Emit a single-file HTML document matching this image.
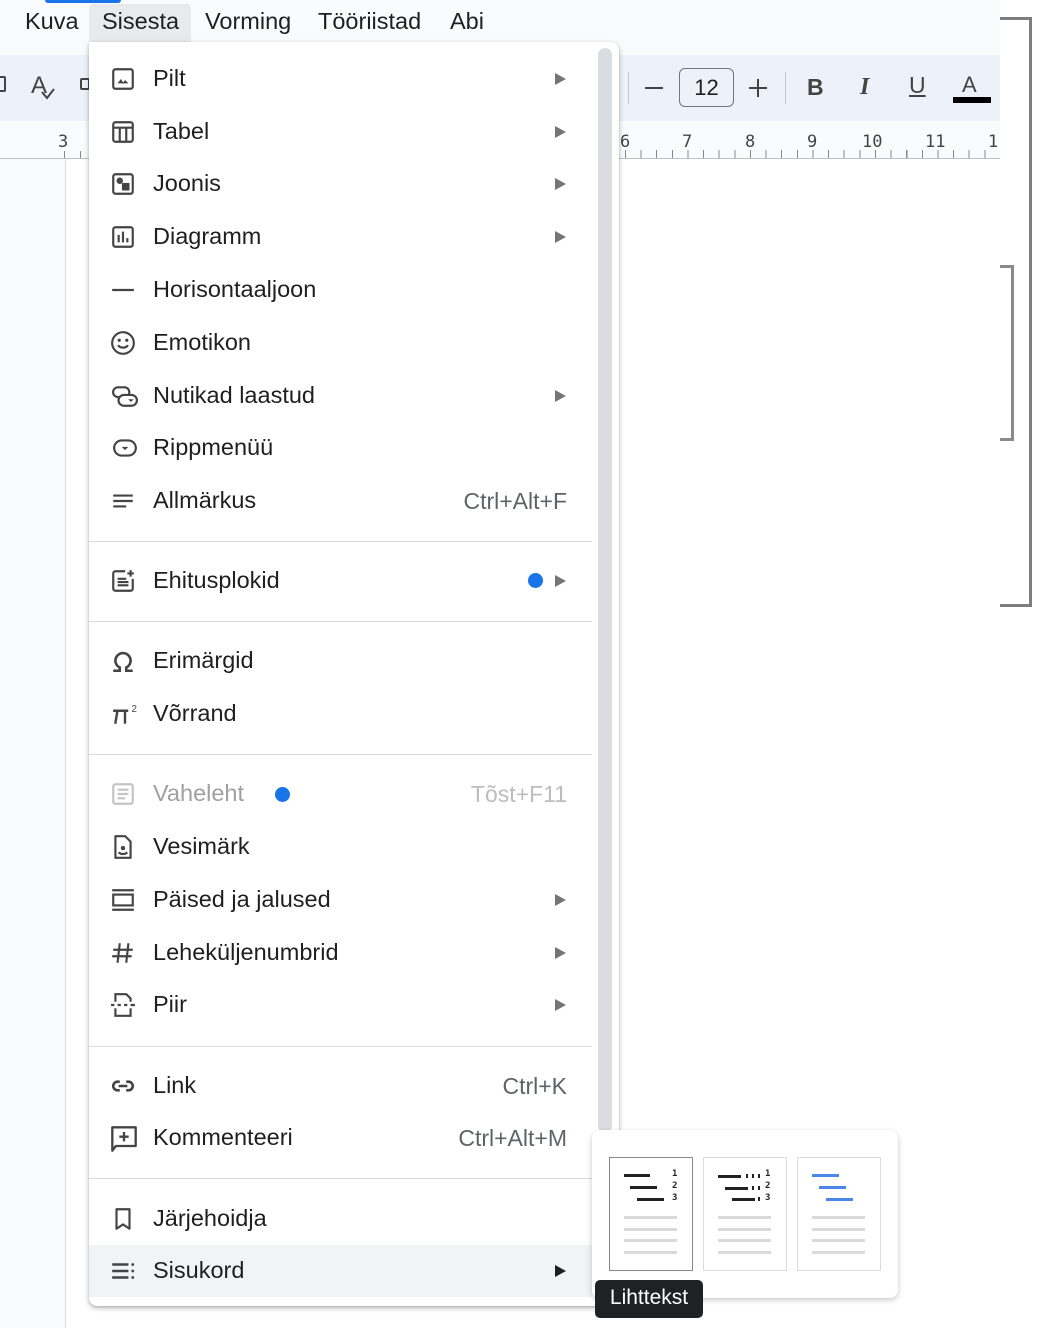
<!DOCTYPE html>
<html><head><meta charset="utf-8"><style>
*{margin:0;padding:0;box-sizing:border-box}
body{width:1047px;height:1328px;position:relative;overflow:hidden;background:#fff;font-family:"Liberation Sans",Roboto,sans-serif;color:#1f1f1f}
.a{position:absolute}
.mb{position:absolute;top:8px;font-size:23.5px;color:#1f1f1f}
.it{position:absolute;left:89px;width:503px;height:52px}
.it .t{position:absolute;left:64px;top:12px;font-size:23.5px;color:#1f1f1f;white-space:nowrap}
.it .s{position:absolute;right:25px;top:13px;font-size:23px;color:#5f6368}
.it .ar{position:absolute;left:466px;top:20px;width:0;height:0;border-left:11px solid #757575;border-top:6px solid transparent;border-bottom:6px solid transparent}
.it svg{position:absolute;left:21px;top:13px}
.sep{position:absolute;left:89px;width:503px;height:1px;background:#dadce0}
.rn{position:absolute;top:132px;font-size:17px;color:#444;font-family:"DejaVu Sans Mono","Liberation Mono",monospace}
.card{position:absolute;top:1157px;width:84px;height:114px;border:1px solid #dadce0;background:#fff}
.card .l{position:absolute;height:3px;background:#222}
.card .g{position:absolute;left:14px;width:53px;height:3px;background:#dadada}
.card .n{position:absolute;font-size:9px;font-weight:bold;font-family:"DejaVu Sans Mono",monospace;color:#222}
.card .d{position:absolute;width:2px;height:4px;background:#222}
</style></head><body>
<div class="a" style="left:0;top:0;width:1000px;height:55px;background:#f9fbfd"></div>
<div class="a" style="left:45px;top:0;width:76px;height:3px;background:#1a73e8;border-radius:0 0 3px 3px"></div>
<div class="a" style="left:89px;top:4px;width:102px;height:38px;background:#e8eaed;border-radius:4px 4px 0 0"></div>
<div class="mb" style="left:25px">Kuva</div>
<div class="mb" style="left:102px">Sisesta</div>
<div class="mb" style="left:205px">Vorming</div>
<div class="mb" style="left:318px">Tööriistad</div>
<div class="mb" style="left:450px">Abi</div>
<div class="a" style="left:0;top:55px;width:1000px;height:66px;background:#edf2fa"></div>
<div class="a" style="left:-6px;top:76px;width:12px;height:16px;border:2px solid #444;border-radius:2px"></div>
<div class="a" style="left:31px;top:72px;font-size:24px;color:#444">A</div>
<svg class="a" style="left:40px;top:88px" width="16" height="12"><path d="M2 4l5 6 7-9" stroke="#444" stroke-width="2" fill="none"/></svg>
<div class="a" style="left:80px;top:78px;width:10px;height:12px;border:2px solid #444;border-radius:2px"></div>
<div class="a" style="left:628px;top:72px;width:1px;height:32px;background:#c7c7c7"></div>
<div class="a" style="left:645px;top:87px;width:18px;height:2px;background:#444"></div>
<div class="a" style="left:679px;top:68px;width:55px;height:39px;border:1px solid #747775;border-radius:6px;font-size:22px;text-align:center;line-height:37px;color:#1f1f1f">12</div>
<div class="a" style="left:749px;top:87px;width:18px;height:2px;background:#444"></div>
<div class="a" style="left:757px;top:79px;width:2px;height:18px;background:#444"></div>
<div class="a" style="left:785px;top:72px;width:1px;height:32px;background:#c7c7c7"></div>
<div class="a" style="left:807px;top:74px;font-size:23px;font-weight:bold;color:#444">B</div>
<div class="a" style="left:860px;top:74px;font-size:24px;font-weight:bold;font-style:italic;color:#444;font-family:'Liberation Serif',serif">I</div>
<div class="a" style="left:909px;top:72px;font-size:23px;color:#444;text-decoration:underline">U</div>
<div class="a" style="left:962px;top:72px;font-size:22px;color:#444">A</div>
<div class="a" style="left:953px;top:97px;width:38px;height:6px;background:#000"></div>
<div class="a" style="left:0;top:121px;width:1000px;height:37px;background:#f9fbfd"></div>
<div class="a" style="left:0;top:158px;width:1000px;height:1px;background:#c0c0c0"></div>
<div class="a" style="left:0;top:159px;width:65px;height:1169px;background:#f9fbfd"></div>
<div class="a" style="left:65px;top:159px;width:1px;height:1169px;background:#dadce0"></div>
<div class="rn" style="left:58px">3</div>
<div class="a" style="left:64px;top:151px;width:1px;height:7px;background:#888"></div>
<div class="a" style="left:80px;top:151px;width:1px;height:7px;background:#888"></div>
<div class="a" style="left:625px;top:150px;width:375px;height:8px;background:repeating-linear-gradient(90deg,#888 0 1px,transparent 1px 15.625px)"></div>
<div class="rn" style="left:620px">6</div><div class="rn" style="left:682px">7</div><div class="rn" style="left:745px">8</div><div class="rn" style="left:807px">9</div><div class="rn" style="left:862px">10</div><div class="rn" style="left:925px">11</div><div class="rn" style="left:988px">1</div>
<div class="a" style="left:1000px;top:17px;width:32px;height:590px;border:3px solid #7d7d7d;border-left:none"></div>
<div class="a" style="left:1000px;top:265px;width:14px;height:176px;border:3px solid #8a8a8a;border-left:none"></div>

<div class="a" style="left:89px;top:42px;width:530px;height:1264px;background:#fff;border-radius:0 8px 8px 8px;box-shadow:0 2px 6px rgba(0,0,0,.25),0 1px 2px rgba(0,0,0,.15)"></div>
<div class="a" style="left:598px;top:48px;width:14px;height:1085px;background:#dadce0;border-radius:7px"></div>
<div class="a" style="left:89px;top:1245px;width:503px;height:52px;background:#f1f3f4"></div>

<div class="it" style="top:53px"><svg width="26" height="26" viewBox="0 0 24 24"><rect x="3" y="3" width="18" height="18" rx="2" fill="none" stroke="#444" stroke-width="2"/><path d="M7 16l3-4 2 3 2-2 3 3z" fill="#444"/></svg><span class="t">Pilt</span><span class="ar"></span></div>
<div class="it" style="top:106px"><svg width="26" height="26" viewBox="0 0 24 24"><rect x="3" y="3" width="18" height="18" rx="2" fill="none" stroke="#444" stroke-width="2"/><path d="M3 8h18M9 8v13M15 8v13" stroke="#444" stroke-width="2"/></svg><span class="t">Tabel</span><span class="ar"></span></div>
<div class="it" style="top:158px"><svg width="26" height="26" viewBox="0 0 24 24"><rect x="3" y="3" width="18" height="18" rx="2" fill="none" stroke="#444" stroke-width="2"/><circle cx="9" cy="9" r="3" fill="#444"/><rect x="11" y="11" width="7" height="7" fill="#444"/></svg><span class="t">Joonis</span><span class="ar"></span></div>
<div class="it" style="top:211px"><svg width="26" height="26" viewBox="0 0 24 24"><rect x="3" y="3" width="18" height="18" rx="2" fill="none" stroke="#444" stroke-width="2"/><path d="M8 10v7M12 7v10M16 13v4" stroke="#444" stroke-width="2"/></svg><span class="t">Diagramm</span><span class="ar"></span></div>
<div class="it" style="top:264px"><svg width="26" height="26" viewBox="0 0 24 24"><path d="M2 12h20" stroke="#444" stroke-width="2"/></svg><span class="t">Horisontaaljoon</span></div>
<div class="it" style="top:317px"><svg width="26" height="26" viewBox="0 0 24 24"><circle cx="12" cy="12" r="10" fill="none" stroke="#444" stroke-width="2"/><circle cx="8.5" cy="9.5" r="1.5" fill="#444"/><circle cx="15.5" cy="9.5" r="1.5" fill="#444"/><path d="M7.5 14c1.5 3 7.5 3 9 0" stroke="#444" stroke-width="2" fill="none"/></svg><span class="t">Emotikon</span></div>
<div class="it" style="top:370px"><svg width="30" height="26" viewBox="0 0 24 24"><rect x="1" y="4" width="15" height="9" rx="4.5" fill="none" stroke="#444" stroke-width="2"/><rect x="6" y="11" width="17" height="10" rx="5" fill="#fff" stroke="#444" stroke-width="2"/><path d="M15 15h5l-2.5 2.5z" fill="#444"/></svg><span class="t">Nutikad laastud</span><span class="ar"></span></div>
<div class="it" style="top:422px"><svg width="30" height="26" viewBox="0 0 24 24"><rect x="2" y="5" width="20" height="14" rx="7" fill="none" stroke="#444" stroke-width="2"/><path d="M9 11h6l-3 3z" fill="#444"/></svg><span class="t">Rippmenüü</span></div>
<div class="it" style="top:475px"><svg width="26" height="26" viewBox="0 0 24 24"><path d="M3 7h18M3 12h18M3 17h12" stroke="#444" stroke-width="2"/></svg><span class="t">Allmärkus</span><span class="s">Ctrl+Alt+F</span></div>
<div class="sep" style="top:541px"></div>
<div class="it" style="top:555px"><svg width="26" height="26" viewBox="0 0 24 24"><path d="M14 3H5a2 2 0 0 0-2 2v14a2 2 0 0 0 2 2h14a2 2 0 0 0 2-2v-9" fill="none" stroke="#444" stroke-width="2"/><path d="M7 10h8M7 13h10M7 16h10M19 2v6M16 5h6" stroke="#444" stroke-width="2"/></svg><span class="t">Ehitusplokid</span><span class="a" style="left:439px;top:18px;width:15px;height:15px;border-radius:50%;background:#1a73e8"></span><span class="ar"></span></div>
<div class="sep" style="top:621px"></div>
<div class="it" style="top:635px"><svg width="26" height="26" viewBox="0 0 24 24"><path d="M3 21h6v-3a7 7 0 1 1 6 0v3h6" fill="none" stroke="#444" stroke-width="2.4"/></svg><span class="t">Erimärgid</span></div>
<div class="it" style="top:688px"><svg width="30" height="26" viewBox="0 0 26 24"><path d="M2 9h14M6 9l-2 12M13 9v12" stroke="#444" stroke-width="2.2" fill="none"/><text x="19" y="10" font-size="9" fill="#444" font-family="Liberation Sans">2</text></svg><span class="t">Võrrand</span></div>
<div class="sep" style="top:754px"></div>
<div class="it" style="top:768px"><svg width="26" height="26" viewBox="0 0 24 24"><rect x="3" y="3" width="18" height="18" rx="2" fill="none" stroke="#c4c4c4" stroke-width="2"/><path d="M7 8h10M7 12h10M7 16h7" stroke="#c4c4c4" stroke-width="2"/></svg><span class="t" style="color:#a0a0a0">Vaheleht</span><span class="a" style="left:186px;top:19px;width:15px;height:15px;border-radius:50%;background:#1a73e8"></span><span class="s" style="color:#bdbdbd">Tõst+F11</span></div>
<div class="it" style="top:821px"><svg width="26" height="26" viewBox="0 0 24 24"><path d="M5 2h9l5 5v15H5z" fill="none" stroke="#444" stroke-width="2" stroke-linejoin="round"/><circle cx="12" cy="13" r="2" fill="#444"/><path d="M8 17c2 2 6 2 8 0" stroke="#444" stroke-width="2" fill="none"/></svg><span class="t">Vesimärk</span></div>
<div class="it" style="top:874px"><svg width="26" height="26" viewBox="0 0 24 24"><path d="M2 3h20M2 21h20" stroke="#444" stroke-width="2"/><rect x="3" y="7" width="18" height="10" fill="none" stroke="#444" stroke-width="2"/></svg><span class="t">Päised ja jalused</span><span class="ar"></span></div>
<div class="it" style="top:927px"><svg width="26" height="26" viewBox="0 0 24 24"><path d="M9 3L7 21M17 3l-2 18M3 9h18M2 15h18" stroke="#444" stroke-width="2"/></svg><span class="t">Leheküljenumbrid</span><span class="ar"></span></div>
<div class="it" style="top:979px"><svg width="26" height="26" viewBox="0 0 24 24"><path d="M5 9V2h10l4 4v3M5 15v7h14v-7M1 12h3M7 12h3M13 12h3M19 12h4" stroke="#444" stroke-width="2" fill="none"/></svg><span class="t">Piir</span><span class="ar"></span></div>
<div class="sep" style="top:1046px"></div>
<div class="it" style="top:1060px"><svg width="26" height="26" viewBox="0 0 24 24"><path d="M9 8H7a4 4 0 0 0 0 8h2M15 8h2a4 4 0 0 1 0 8h-2M8 12h8" stroke="#444" stroke-width="2.4" fill="none"/></svg><span class="t">Link</span><span class="s">Ctrl+K</span></div>
<div class="it" style="top:1112px"><svg width="28" height="28" viewBox="0 0 24 24"><path d="M2 2h20v16H5l-3 4z" fill="none" stroke="#444" stroke-width="2" stroke-linejoin="round"/><path d="M12 6v8M8 10h8" stroke="#444" stroke-width="2"/></svg><span class="t">Kommenteeri</span><span class="s">Ctrl+Alt+M</span></div>
<div class="sep" style="top:1178px"></div>
<div class="it" style="top:1193px"><svg width="26" height="26" viewBox="0 0 24 24"><path d="M6 3h12v18l-6-4-6 4z" fill="none" stroke="#444" stroke-width="2" stroke-linejoin="round"/></svg><span class="t">Järjehoidja</span></div>
<div class="it" style="top:1245px"><svg width="26" height="26" viewBox="0 0 24 24"><path d="M2 6h15M2 12h15M2 18h15" stroke="#444" stroke-width="2.2"/><circle cx="21" cy="6" r="1.3" fill="#444"/><circle cx="21" cy="12" r="1.3" fill="#444"/><circle cx="21" cy="18" r="1.3" fill="#444"/></svg><span class="t">Sisukord</span><span class="ar" style="border-left-color:#1f1f1f"></span></div>

<div class="a" style="left:592px;top:1130px;width:306px;height:168px;background:#fff;border-radius:8px;box-shadow:0 2px 6px rgba(0,0,0,.22)"></div>
<div class="card" style="left:609px;border-color:#888">
  <div class="l" style="left:14px;top:16px;width:26px"></div><div class="l" style="left:20px;top:28px;width:27px"></div><div class="l" style="left:27px;top:40px;width:27px"></div>
  <div class="n" style="left:62px;top:11px">1</div><div class="n" style="left:62px;top:23px">2</div><div class="n" style="left:62px;top:35px">3</div>
  <div class="g" style="top:58px"></div><div class="g" style="top:70px"></div><div class="g" style="top:81px"></div><div class="g" style="top:93px"></div>
</div>
<div class="card" style="left:703px">
  <div class="l" style="left:14px;top:17px;width:23px"></div><div class="l" style="left:21px;top:29px;width:23px"></div><div class="l" style="left:28px;top:40px;width:23px"></div>
  <div class="d" style="left:42px;top:16px"></div><div class="d" style="left:48px;top:16px"></div><div class="d" style="left:54px;top:16px"></div>
  <div class="d" style="left:48px;top:28px"></div><div class="d" style="left:54px;top:28px"></div><div class="d" style="left:54px;top:39px"></div>
  <div class="n" style="left:61px;top:11px">1</div><div class="n" style="left:61px;top:23px">2</div><div class="n" style="left:61px;top:35px">3</div>
  <div class="g" style="top:58px"></div><div class="g" style="top:70px"></div><div class="g" style="top:81px"></div><div class="g" style="top:93px"></div>
</div>
<div class="card" style="left:797px">
  <div class="l" style="left:14px;top:16px;width:27px;background:#4a86e8"></div><div class="l" style="left:21px;top:28px;width:27px;background:#4a86e8"></div><div class="l" style="left:28px;top:40px;width:27px;background:#4a86e8"></div>
  <div class="g" style="top:58px"></div><div class="g" style="top:70px"></div><div class="g" style="top:81px"></div><div class="g" style="top:93px"></div>
</div>
<div class="a" style="left:595px;top:1280px;width:108px;height:38px;background:#202124;border-radius:5px;color:#fff;font-size:21px;line-height:36px;text-align:center">Lihttekst</div>
</body></html>
